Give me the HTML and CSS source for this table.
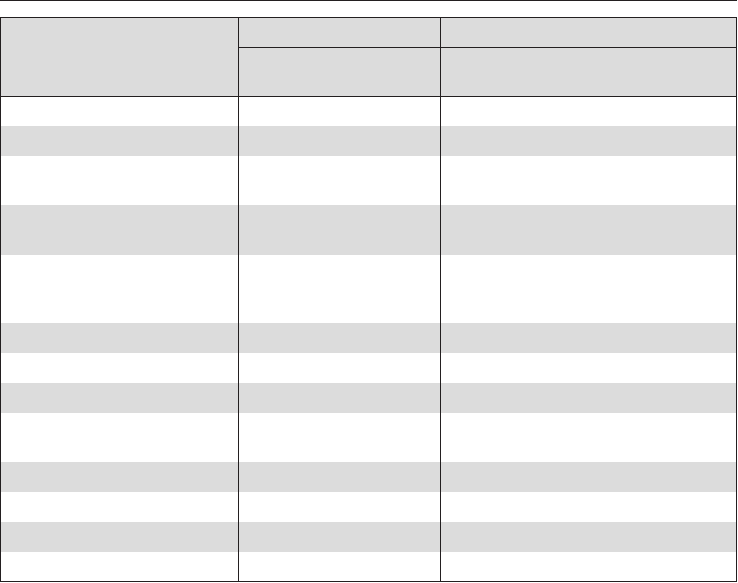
FILE: index.html
```html
<!DOCTYPE html>
<html>
<head>
<meta charset="utf-8">
<link rel="stylesheet" href="styles.css">
</head>
<body>
<div class="rule"></div>
<div class="table">
  <div class="head">
    <div class="hcell span"></div>
    <div class="hcell sep"></div>
    <div class="hcell sep"></div>
    <div class="hcell sep top"></div>
    <div class="hcell sep top"></div>
  </div>
  <div class="row h29"><div class="cell"></div><div class="cell sep"></div><div class="cell sep"></div></div>
  <div class="row h30 alt"><div class="cell"></div><div class="cell sep"></div><div class="cell sep"></div></div>
  <div class="row h49"><div class="cell"></div><div class="cell sep"></div><div class="cell sep"></div></div>
  <div class="row h50 alt"><div class="cell"></div><div class="cell sep"></div><div class="cell sep"></div></div>
  <div class="row h68"><div class="cell"></div><div class="cell sep"></div><div class="cell sep"></div></div>
  <div class="row h30 alt"><div class="cell"></div><div class="cell sep"></div><div class="cell sep"></div></div>
  <div class="row h30"><div class="cell"></div><div class="cell sep"></div><div class="cell sep"></div></div>
  <div class="row h30 alt"><div class="cell"></div><div class="cell sep"></div><div class="cell sep"></div></div>
  <div class="row h49"><div class="cell"></div><div class="cell sep"></div><div class="cell sep"></div></div>
  <div class="row h30 alt"><div class="cell"></div><div class="cell sep"></div><div class="cell sep"></div></div>
  <div class="row h30"><div class="cell"></div><div class="cell sep"></div><div class="cell sep"></div></div>
  <div class="row h30 alt"><div class="cell"></div><div class="cell sep"></div><div class="cell sep"></div></div>
  <div class="row h29"><div class="cell"></div><div class="cell sep"></div><div class="cell sep"></div></div>
</div>
</body>
</html>
```
FILE: styles.css
```css
html, body {
  margin: 0;
  padding: 0;
  background: #ffffff;
  font-family: "Liberation Sans", Arial, sans-serif;
}

.rule {
  width: 737px;
  height: 1px;
  background: #231f20;
}

.table {
  box-sizing: border-box;
  width: 737px;
  margin-top: 16px;
  border: 1px solid #231f20;
}

.head {
  display: grid;
  grid-template-columns: 237px 202px 296px;
  grid-template-rows: 29px 49px;
  background: #dcdcdc;
  border-bottom: 1px solid #231f20;
}

.hcell {
  box-sizing: border-box;
}

.span {
  grid-row: 1 / span 2;
}

.row {
  display: grid;
  grid-template-columns: 237px 202px 296px;
}

.cell {
  box-sizing: border-box;
}

.sep {
  border-left: 1px solid #231f20;
}

.top {
  border-top: 1px solid #231f20;
}

.alt {
  background: #dcdcdc;
}

.h29 { height: 29px; }
.h30 { height: 30px; }
.h49 { height: 49px; }
.h50 { height: 50px; }
.h68 { height: 68px; }
```
